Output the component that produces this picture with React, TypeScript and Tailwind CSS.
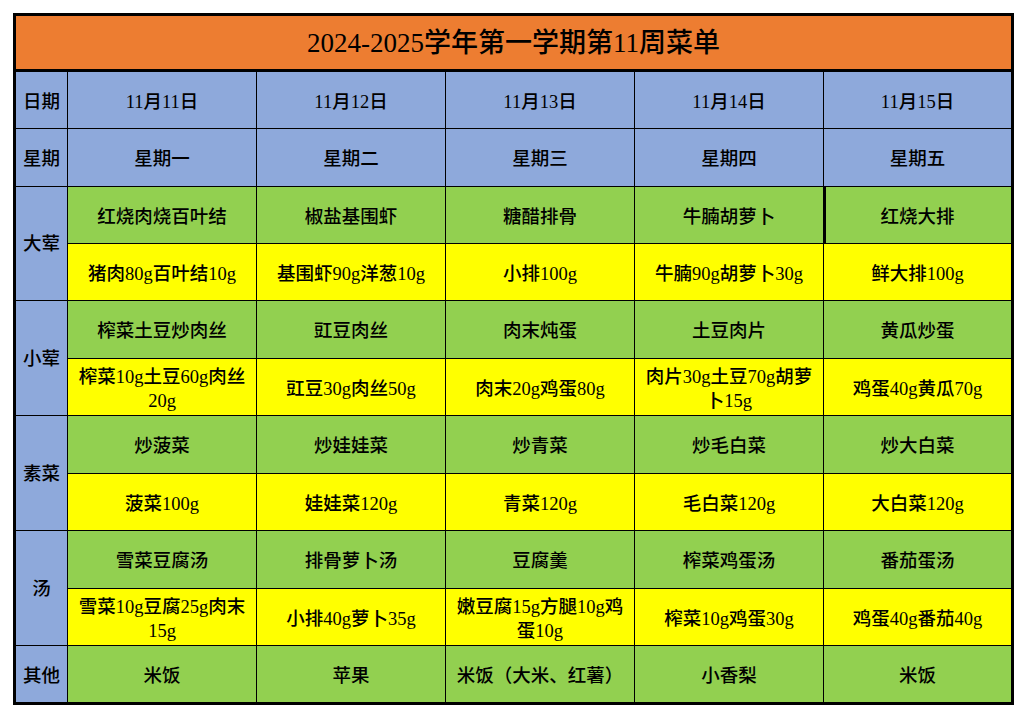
import React from "react";

const FONT = { fontFamily: "'Liberation Serif', 'Noto Sans CJK SC', serif" };

type Cell = { lines: string[]; bg: string; extra?: string };

const BLUE = "bg-[#8ea9db]";
const GREEN = "bg-[#92d050]";
const YELLOW = "bg-[#ffff00]";

const dates = ["11月11日", "11月12日", "11月13日", "11月14日", "11月15日"];
const weekdays = ["星期一", "星期二", "星期三", "星期四", "星期五"];

const groups: { label: string; dish: string[]; detail: string[][] }[] = [
  {
    label: "大荤",
    dish: ["红烧肉烧百叶结", "椒盐基围虾", "糖醋排骨", "牛腩胡萝卜", "红烧大排"],
    detail: [["猪肉80g百叶结10g"], ["基围虾90g洋葱10g"], ["小排100g"], ["牛腩90g胡萝卜30g"], ["鲜大排100g"]],
  },
  {
    label: "小荤",
    dish: ["榨菜土豆炒肉丝", "豇豆肉丝", "肉末炖蛋", "土豆肉片", "黄瓜炒蛋"],
    detail: [["榨菜10g土豆60g肉丝", "20g"], ["豇豆30g肉丝50g"], ["肉末20g鸡蛋80g"], ["肉片30g土豆70g胡萝", "卜15g"], ["鸡蛋40g黄瓜70g"]],
  },
  {
    label: "素菜",
    dish: ["炒菠菜", "炒娃娃菜", "炒青菜", "炒毛白菜", "炒大白菜"],
    detail: [["菠菜100g"], ["娃娃菜120g"], ["青菜120g"], ["毛白菜120g"], ["大白菜120g"]],
  },
  {
    label: "汤",
    dish: ["雪菜豆腐汤", "排骨萝卜汤", "豆腐羹", "榨菜鸡蛋汤", "番茄蛋汤"],
    detail: [["雪菜10g豆腐25g肉末", "15g"], ["小排40g萝卜35g"], ["嫩豆腐15g方腿10g鸡", "蛋10g"], ["榨菜10g鸡蛋30g"], ["鸡蛋40g番茄40g"]],
  },
];

const others = ["米饭", "苹果", "米饭（大米、红薯）", "小香梨", "米饭"];

function C({ cell }: { cell: Cell }) {
  return (
    <div className={`${cell.bg} ${cell.extra ?? ""} flex flex-col items-center justify-center text-[18.5px] leading-[24px] font-medium text-black text-center pt-[3px]`}>
      {cell.lines.map((l, i) => (
        <div key={i} className="whitespace-nowrap">
          {l}
        </div>
      ))}
    </div>
  );
}

export default function App() {
  return (
    <div className="w-[1027px] h-[713px] bg-white pt-[13px] pl-[13px]" style={FONT}>
      <div className="w-fit border-[3px] border-black">
        <div className="h-[56px] bg-[#ed7d31] border-b-[3px] border-black flex items-center justify-center text-[27px] font-medium text-black pt-[2px]">
          2024-2025学年第一学期第11周菜单
        </div>
        <div className="grid gap-px bg-black grid-cols-[51px_188px_188px_188px_188px_187px] grid-rows-[56px_57px_56px_56px_57px_56px_57px_56px_57px_56px_56px]">
          <C cell={{ lines: ["日期"], bg: BLUE }} />
          {dates.map((d) => (
            <C key={d} cell={{ lines: [d], bg: BLUE }} />
          ))}
          <C cell={{ lines: ["星期"], bg: BLUE }} />
          {weekdays.map((d) => (
            <C key={d} cell={{ lines: [d], bg: BLUE }} />
          ))}
          {groups.map((g) => (
            <React.Fragment key={g.label}>
              <div className={`${BLUE} row-span-2 flex items-center justify-center text-[18.5px] font-medium text-black pt-[3px]`}>{g.label}</div>
              {g.dish.map((d, i) => (
                <C
                  key={"d" + i}
                  cell={{
                    lines: [d],
                    bg: GREEN,
                    extra: g.label === "大荤" && i === 4 ? "shadow-[inset_2px_0_0_#000]" : "",
                  }}
                />
              ))}
              {g.detail.map((d, i) => (
                <C key={"t" + i} cell={{ lines: d, bg: YELLOW }} />
              ))}
            </React.Fragment>
          ))}
          <C cell={{ lines: ["其他"], bg: BLUE }} />
          {others.map((d, i) => (
            <C key={"o" + i} cell={{ lines: [d], bg: GREEN }} />
          ))}
        </div>
      </div>
    </div>
  );
}
